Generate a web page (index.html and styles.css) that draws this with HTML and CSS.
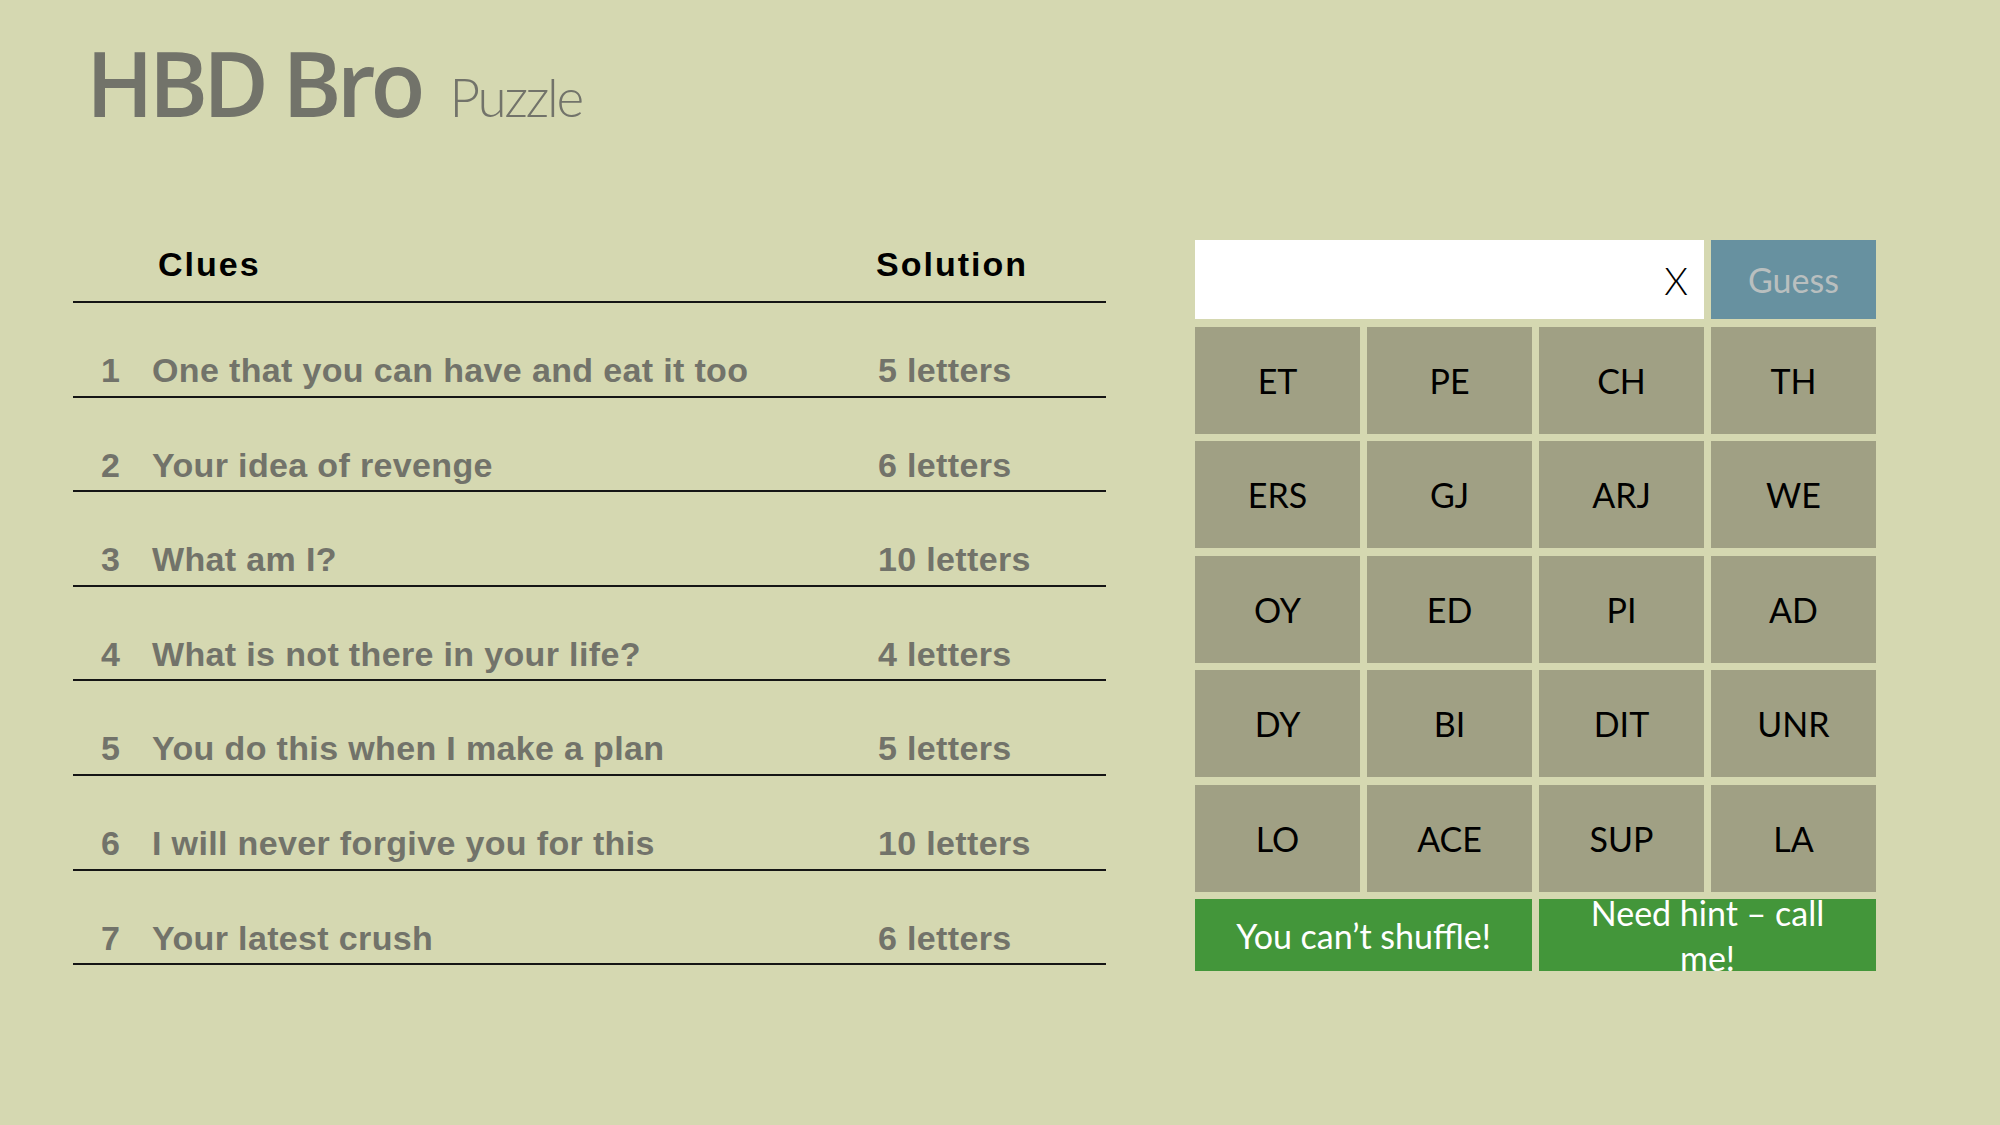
FILE: index.html
```html
<!DOCTYPE html>
<html lang="en">
<head>
<meta charset="utf-8">
<title>HBD Bro Puzzle</title>
<link rel="stylesheet" href="styles.css">
</head>
<body>
<header class="title">
  <span class="title-main">HBD Bro</span><span class="title-sub">Puzzle</span>
</header>
<main class="main">
  <section class="clues">
    <div class="row head">
      <span class="num"></span>
      <span class="clue">Clues</span>
      <span class="sol">Solution</span>
    </div>
    <div class="row"><span class="num">1</span><span class="clue">One that you can have and eat it too</span><span class="sol">5 letters</span></div>
    <div class="row"><span class="num">2</span><span class="clue">Your idea of revenge</span><span class="sol">6 letters</span></div>
    <div class="row"><span class="num">3</span><span class="clue">What am I?</span><span class="sol">10 letters</span></div>
    <div class="row"><span class="num">4</span><span class="clue">What is not there in your life?</span><span class="sol">4 letters</span></div>
    <div class="row"><span class="num">5</span><span class="clue">You do this when I make a plan</span><span class="sol">5 letters</span></div>
    <div class="row"><span class="num">6</span><span class="clue">I will never forgive you for this</span><span class="sol">10 letters</span></div>
    <div class="row"><span class="num">7</span><span class="clue">Your latest crush</span><span class="sol">6 letters</span></div>
  </section>
  <section class="board">
    <div class="entry"><span class="clear">X</span></div>
    <div class="guess">Guess</div>
    <div class="tile">ET</div><div class="tile">PE</div><div class="tile">CH</div><div class="tile">TH</div>
    <div class="tile">ERS</div><div class="tile">GJ</div><div class="tile">ARJ</div><div class="tile">WE</div>
    <div class="tile">OY</div><div class="tile">ED</div><div class="tile">PI</div><div class="tile">AD</div>
    <div class="tile">DY</div><div class="tile">BI</div><div class="tile">DIT</div><div class="tile">UNR</div>
    <div class="tile">LO</div><div class="tile">ACE</div><div class="tile">SUP</div><div class="tile">LA</div>
    <div class="action">You can’t shuffle!</div>
    <div class="action hint"><span>Need hint – call me!</span></div>
  </section>
</main>
</body>
</html>
```

FILE: styles.css
```css
html, body {
  margin: 0;
  padding: 0;
  background: #d5d8b1;
}

body {
  width: 2000px;
  height: 1125px;
  overflow: hidden;
  padding-top: 37px;
  box-sizing: border-box;
  font-family: "Liberation Sans", Arial, sans-serif;
  color: #72736a;
}

.title {
  padding-left: 86px;
  line-height: 90px;
  height: 90px;
  white-space: nowrap;
}

.title-main {
  font-family: "Open Sans", sans-serif;
  font-weight: 600;
  font-size: 90px;
  letter-spacing: -5px;
}

.title-sub {
  font-family: Lato, "Open Sans", sans-serif;
  font-weight: 300;
  font-size: 53px;
  letter-spacing: -2.2px;
  margin-left: 29px;
}

.main {
  display: flex;
  margin-top: 113px;
  padding-left: 73px;
  gap: 89px;
}

.clues {
  width: 1033px;
}

.row {
  display: grid;
  grid-template-columns: 79px 726px 1fr;
  align-items: start;
  font-weight: 700;
  font-size: 34px;
  letter-spacing: 0.35px;
  line-height: 33px;
  padding-top: 51px;
  padding-bottom: 8.6px;
  border-bottom: 2px solid #151515;
  white-space: nowrap;
}

.row.head {
  padding-top: 8px;
  padding-bottom: 20px;
  color: #000;
  letter-spacing: 2px;
}

.num {
  padding-left: 28px;
}

.head .clue {
  padding-left: 6px;
}

.head .sol {
  margin-left: -2px;
}

.board {
  display: grid;
  grid-template-columns: repeat(4, 165px);
  grid-template-rows: 79px repeat(5, 107px) 72px;
  column-gap: 7px;
  row-gap: 7.5px;
  font-family: Lato, "Open Sans", sans-serif;
  font-size: 34px;
}

.entry {
  grid-column: span 3;
  background: #ffffff;
  display: flex;
  align-items: center;
  justify-content: flex-end;
  padding-right: 16px;
  color: #000;
}

.clear {
  font-weight: 300;
  font-size: 38px;
}

.guess {
  background: #6791a0;
  color: #b9bfbf;
  display: flex;
  align-items: center;
  justify-content: center;
}

.tile {
  background: #a0a084;
  color: #000;
  display: flex;
  align-items: center;
  justify-content: center;
}

.action {
  grid-column: span 2;
  background: #43963a;
  color: #ffffff;
  display: flex;
  align-items: center;
  justify-content: center;
  text-align: center;
  overflow: hidden;
  line-height: 45px;
}

.hint {
  padding: 0 36px;
}
```
